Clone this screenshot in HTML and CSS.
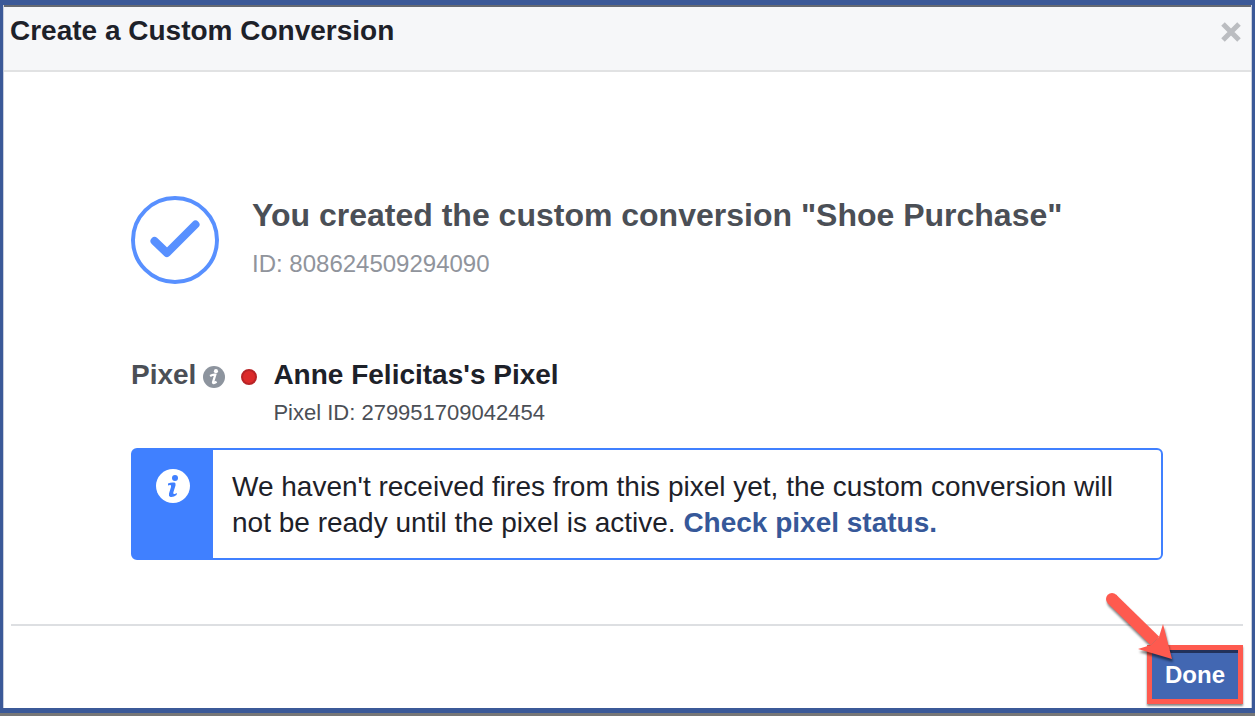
FILE: index.html
```html
<!DOCTYPE html>
<html lang="en">
	<head>
		<meta charset="utf-8">
		<title>Create a Custom Conversion</title>
		<link rel="stylesheet" href="styles.css">
	</head>
	<body>
		<div class="dialog">
			<header class="dialog-header">
				<h1>Create a Custom Conversion</h1>
				<button class="close" type="button" aria-label="Close">
					<svg width="20" height="20" viewBox="0 0 20 20"><path d="M2 2L18 18M18 2L2 18" stroke="#bbbdc1" stroke-width="5"/></svg>
				</button>
			</header>
			<main class="content">
				<section class="success">
					<svg width="88" height="88" viewBox="0 0 88 88" fill="none" stroke="#5890ff">
						<circle cx="44" cy="44" r="42" stroke-width="4"/>
						<path d="M23.500 45L36 57L64.500 28.500" stroke-width="8" stroke-linecap="round" stroke-linejoin="round"/>
					</svg>
					<div>
						<h2>You created the custom conversion "Shoe Purchase"</h2>
						<p class="conversion-id">ID: 808624509294090</p>
					</div>
				</section>
				<section class="pixel">
					<div class="pixel-label">
						<span>Pixel</span>
						<svg class="info-small" width="22" height="22" viewBox="0 0 34 34">
							<circle cx="17" cy="17" r="17" fill="#8d949e"/>
							<circle cx="20" cy="8" r="3.200" fill="#fff"/>
							<path d="M11 15.500Q15 13 19 13.500L15.500 25Q15 28 21 24.500" fill="none" stroke="#fff" stroke-width="3.500"/>
						</svg>
						<span class="status-dot"></span>
					</div>
					<div>
						<h3>Anne Felicitas's Pixel</h3>
						<p class="pixel-id">Pixel ID: 279951709042454</p>
					</div>
				</section>
				<section class="notice">
					<div class="notice-icon">
						<svg width="34" height="34" viewBox="0 0 34 34">
							<circle cx="17" cy="17" r="17" fill="#fff"/>
							<circle cx="19" cy="9" r="3" fill="#4080ff"/>
							<path d="M12 14.500Q15 13 18.500 13.500Q20 14 19.500 16.500L17.300 23.500Q17 25.500 18.800 25L21 24L20.500 26Q17.500 28.500 14.500 28Q12.300 27 13 24.500L15 18Q15.500 15.800 14 16L12 16.500Z" fill="#4080ff"/>
						</svg>
					</div>
					<p>We haven't received fires from this pixel yet, the custom conversion will not be ready until the pixel is active. <a href="#">Check pixel status.</a></p>
				</section>
			</main>
			<footer class="dialog-footer">
				<div class="highlight">
					<button class="done" type="button">Done</button>
					<svg class="arrow" width="74" height="76" viewBox="0 0 74 76">
						<path d="M12 12L55 54" stroke="#fe5a4f" stroke-width="12" stroke-linecap="butt"/>
						<circle cx="12" cy="12" r="6" fill="#fe5a4f"/>
						<path d="M63 37L72 72L38 62L51 58L59 50Z" fill="#fe5a4f"/>
					</svg>
				</div>
			</footer>
		</div>
	</body>
</html>
```
FILE: styles.css
```css
*{
	margin: 0;
	padding: 0;
	box-sizing: border-box;
}

body{
	min-height: 100vh;
	display: flex;
	background: #3b5998;
	border-bottom: 3px solid #777;
	padding: 5px 3px 5px 3px;
	font-family: "Liberation Sans", Arial, sans-serif;
	color: #1d2129;
}

.dialog{
	flex: 1;
	display: flex;
	flex-direction: column;
	background: #fff;
	border: 1px solid #c9cfdd;
	border-width: 0 1px;
}

.dialog-header{
	display: flex;
	justify-content: space-between;
	align-items: flex-start;
	padding: 7px 10px 22px 6px;
	background: #f6f7f9;
	border-top: 2px solid #666a72;
	border-bottom: 2px solid #e1e2e3;
}
.dialog-header h1{
	font-size: 28px;
	line-height: 34px;
}

button{
	border: none;
	font-family: inherit;
	cursor: pointer;
}
.close{
	height: 20px;
	margin-top: 8px;
	background: none;
}
svg{
	display: block;
	flex: none;
}

.content{
	flex: 1;
	padding: 124px 88px 0 127px;
}

.success{
	display: flex;
	gap: 33px;
}
.success h2{
	font-size: 32px;
	line-height: 38px;
	color: #4b4f56;
}
.conversion-id{
	margin-top: 16px;
	font-size: 24px;
	line-height: 28px;
	color: #90949c;
}

.pixel{
	display: flex;
	gap: 16px;
	margin-top: 74px;
}
.pixel h3,.pixel-label{
	font-size: 28px;
	font-weight: bold;
	line-height: 34px;
}
.pixel-label{
	display: flex;
	align-items: center;
	height: 34px;
	color: #4b4f56;
}
.info-small{
	margin: 4px 16px 0 7px;
}
.status-dot{
	width: 16px;
	height: 16px;
	margin-top: 4px;
	border: 2px solid #b82326;
	border-radius: 50%;
	background: #dc2a2a;
}
.pixel-id{
	margin-top: 8px;
	font-size: 22px;
	line-height: 26px;
	color: #4b4f56;
}

.notice{
	display: flex;
	margin-top: 22px;
	border: 2px solid #4080ff;
	border-radius: 6px;
}
.notice-icon{
	flex: none;
	width: 80px;
	padding: 19px 23px;
	background: #4080ff;
}
.notice p{
	padding: 19px 19px 17px;
	font-size: 28px;
	line-height: 36px;
}
.notice a{
	color: #365899;
	font-weight: bold;
	text-decoration: none;
}

.dialog-footer{
	display: flex;
	justify-content: flex-end;
	margin: 0 8px 0 7px;
	padding: 19px 0 4px;
	border-top: 2px solid #dddfe2;
}
.highlight{
	position: relative;
	border: 5px solid #fe5a4f;
	box-shadow: 0 2px 2px #888;
}
.done{
	display: block;
	padding: 8px 13px 10px;
	border-top: 3px solid #21315a;
	background: #4267b2;
	color: #fff;
	font-size: 24px;
	font-weight: bold;
	line-height: 28px;
}
/* pointer lying over the corner of the button */
.arrow{
	position: absolute;
	top: -63px;
	left: -52px;
	overflow: visible;
	filter: drop-shadow(1px 3px 1px rgba(0,0,0,.5));
	pointer-events: none;
}
```
